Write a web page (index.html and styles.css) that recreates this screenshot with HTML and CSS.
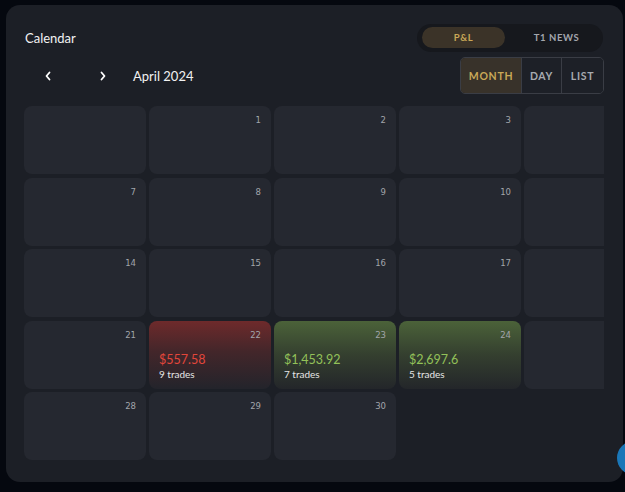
FILE: index.html
```html
<!DOCTYPE html>
<html lang="en">
<head>
  <meta charset="UTF-8" />
  <meta name="viewport" content="width=device-width, initial-scale=1.0"/>
  <title>Calendar</title>
  <link rel="stylesheet" href="styles.css">
</head>
<body>
  <div class="card">
    <div class="top-row">
      <h2 class="title">Calendar</h2>
      <div class="toggle">
        <button class="toggle-btn active">P&amp;L</button>
        <button class="toggle-btn news">T1 NEWS</button>
      </div>
    </div>

    <div class="nav-row">
      <div class="nav">
        <button class="nav-btn prev">
          <svg width="8" height="10" viewBox="0 0 8 10"><path d="M5.5 1.5 L2.5 5 L5.5 8.5" fill="none" stroke="#fff" stroke-width="1.8" stroke-linecap="round" stroke-linejoin="round"/></svg>
        </button>
        <button class="nav-btn next">
          <svg width="8" height="10" viewBox="0 0 8 10"><path d="M2.5 1.5 L5.5 5 L2.5 8.5" fill="none" stroke="#fff" stroke-width="1.8" stroke-linecap="round" stroke-linejoin="round"/></svg>
        </button>
        <span class="month-label">April 2024</span>
      </div>
      <div class="views">
        <button class="view-btn month active">MONTH</button>
        <button class="view-btn day">DAY</button>
        <button class="view-btn list">LIST</button>
      </div>
    </div>

    <div class="grid-wrap">
      <div class="grid" id="grid">
        <!-- filled by script -->
      </div>
    </div>
  </div>

  <div class="fab"></div>

  <script>
    // 0 = empty cell, null = no cell; only Sun-Thu fit in the visible area
    const weeks = [
      [0, 1, 2, 3, 4],
      [7, 8, 9, 10, 11],
      [14, 15, 16, 17, 18],
      [21, 22, 23, 24, 25],
      [28, 29, 30, null, null]
    ];

    const trades = {
      22: { pnl: "$557.58", count: 9, type: "loss" },
      23: { pnl: "$1,453.92", count: 7, type: "win" },
      24: { pnl: "$2,697.6", count: 5, type: "win" }
    };

    const grid = document.getElementById("grid");

    weeks.forEach(week => {
      week.forEach((day, col) => {
        const cell = document.createElement("div");
        if (day === null) {
          cell.className = "cell blank";
          grid.appendChild(cell);
          return;
        }
        const t = trades[day];
        // last column is cut by the panel edge, its number sits out of view
        const label = day && col < 4 ? day : "";
        cell.className = "cell" + (t ? " " + t.type : "");
        cell.innerHTML = `<span class="day-num">${label}</span>`;
        if (t) {
          cell.innerHTML += `
            <span class="pnl">${t.pnl}</span>
            <span class="count">${t.count} trades</span>
          `;
        }
        grid.appendChild(cell);
      });
    });
  </script>
</body>
</html>
```

FILE: styles.css
```css
body {
  margin: 0;
  background: #05080f;
  font-family: Lato, "Open Sans", sans-serif;
  color: #f0f0f0;
  overflow: hidden;
}

.card {
  margin: 5px 0 0 6px;
  width: 617px;
  height: 477px;
  box-sizing: border-box;
  padding: 19px 19px 0 18px;
  background: #1c1f26;
  border-radius: 14px;
}

.top-row {
  display: flex;
  justify-content: space-between;
  align-items: center;
  height: 28px;
  padding-left: 1px;
}

.title {
  margin: 0;
  font-size: 13px;
  font-weight: 400;
  color: #f2f2f2;
}

button {
  font-family: inherit;
  border: none;
  background: none;
  cursor: pointer;
  padding: 0;
}

.toggle {
  display: flex;
  width: 186px;
  height: 28px;
  box-sizing: border-box;
  padding: 3px 5px;
  background: #16181d;
  border-radius: 14px;
  margin-right: 1px;
}

.toggle-btn {
  height: 21px;
  font-size: 9.5px;
  font-weight: 700;
  letter-spacing: 0.6px;
  color: #a3a6ad;
  border-radius: 11px;
}

.toggle-btn.active {
  width: 83px;
  background: #3b3328;
  color: #c9a857;
}

.toggle-btn.news {
  flex: 1;
  padding-left: 10px;
}

.nav-row {
  display: flex;
  justify-content: space-between;
  align-items: center;
  margin-top: 5px;
  height: 37px;
}

.nav {
  display: flex;
  align-items: center;
}

.nav-btn {
  width: 24px;
  height: 24px;
  display: flex;
  align-items: center;
  justify-content: center;
}

.nav-btn.prev {
  margin-left: 12px;
}

.nav-btn.next {
  margin-left: 31px;
}

.month-label {
  margin-left: 18px;
  font-size: 13px;
  color: #f2f2f2;
}

.views {
  display: flex;
  height: 37px;
  border: 1px solid #3a3d45;
  border-radius: 5px;
  overflow: hidden;
  box-sizing: border-box;
}

.view-btn {
  font-size: 10.5px;
  font-weight: 700;
  letter-spacing: 0.7px;
  color: #a7aab0;
  background: #1d2027;
  border-left: 1px solid #3a3d45;
}

.view-btn.month {
  width: 60px;
  border-left: none;
  background: #38322a;
  color: #c9a857;
}

.view-btn.day {
  width: 40px;
}

.view-btn.list {
  width: 42px;
}

.grid-wrap {
  margin-top: 12px;
  width: 580px;
  overflow: hidden;
}

.grid {
  display: grid;
  grid-template-columns: repeat(5, 122px);
  grid-auto-rows: 68px;
  gap: 3.5px 3px;
}

.cell {
  display: flex;
  flex-direction: column;
  background: #252830;
  border-radius: 8px;
  padding: 9px 10px 0 10px;
  box-sizing: border-box;
}

.cell.blank {
  background: none;
}

.day-num {
  align-self: flex-end;
  height: 11px;
  font-family: "DejaVu Sans", sans-serif;
  font-size: 8.5px;
  line-height: 11px;
  color: #a2a5ab;
}

.cell.loss {
  background: linear-gradient(180deg, #6e2a2b 0%, #43262a 45%, #23242b 100%);
}

.cell.win {
  background: linear-gradient(180deg, #4b6239 0%, #343f2f 50%, #23262a 100%);
}

.pnl {
  margin-top: 11px;
  font-size: 12.5px;
  line-height: 15px;
}

.loss .pnl {
  color: #e3463b;
}

.win .pnl {
  color: #93c159;
}

.count {
  margin-top: 1px;
  font-size: 10px;
  line-height: 12px;
  color: #e6e6e6;
}

.fab {
  position: fixed;
  left: 617px;
  top: 441px;
  width: 34px;
  height: 34px;
  border-radius: 50%;
  background: #1a77b8;
}
```
